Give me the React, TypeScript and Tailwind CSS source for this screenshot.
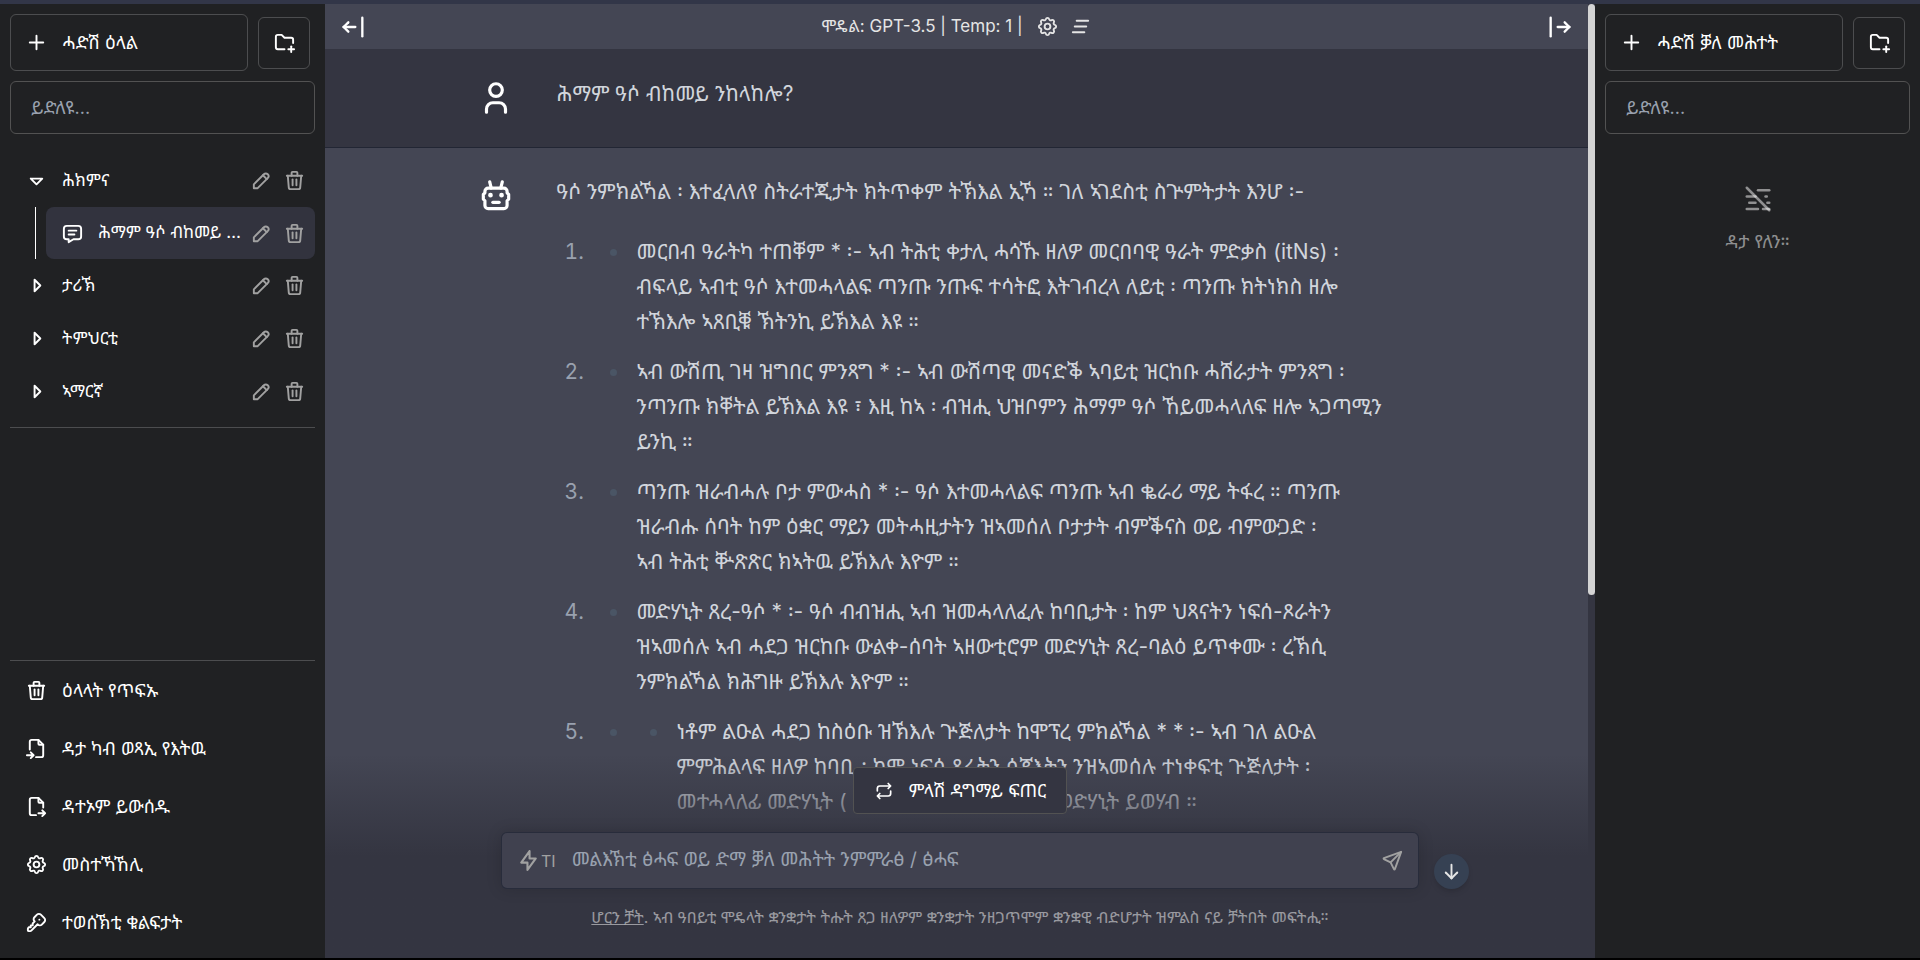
import { Fragment, type ReactNode } from "react";

const ICONS = {
  plus: ["M12 5v14", "M5 12h14"],
  folderPlus: [
    "M12 19h-7a2 2 0 0 1 -2 -2v-11a2 2 0 0 1 2 -2h4l3 3h7a2 2 0 0 1 2 2v3.5",
    "M16 19h6",
    "M19 16v6",
  ],
  caretDown: ["M6 10l6 6l6 -6h-12"],
  caretRight: ["M10 18l6 -6l-6 -6v12"],
  pencil: ["M4 20h4l10.5 -10.5a1.5 1.5 0 0 0 -4 -4l-10.5 10.5v4", "M13.5 6.5l4 4"],
  trash: [
    "M4 7h16",
    "M10 11v6",
    "M14 11v6",
    "M5 7l1 12a2 2 0 0 0 2 2h8a2 2 0 0 0 2 -2l1 -12",
    "M9 7v-3a1 1 0 0 1 1 -1h4a1 1 0 0 1 1 1v3",
  ],
  message: [
    "M8 9h8",
    "M8 13h6",
    "M18 4a3 3 0 0 1 3 3v8a3 3 0 0 1 -3 3h-5l-5 3v-3h-2a3 3 0 0 1 -3 -3v-8a3 3 0 0 1 3 -3h12z",
  ],
  fileImport: [
    "M14 3v4a1 1 0 0 0 1 1h4",
    "M5 13v-8a2 2 0 0 1 2 -2h7l5 5v11a2 2 0 0 1 -2 2h-5.5m-9.5 -2h7m-3 -3l3 3l-3 3",
  ],
  fileExport: [
    "M14 3v4a1 1 0 0 0 1 1h4",
    "M11.5 21h-4.5a2 2 0 0 1 -2 -2v-14a2 2 0 0 1 2 -2h7l5 5v5m-5 6h7m-3 -3l3 3l-3 3",
  ],
  settings: [
    "M10.325 4.317c.426 -1.756 2.924 -1.756 3.35 0a1.724 1.724 0 0 0 2.573 1.066c1.543 -.94 3.31 .826 2.37 2.37a1.724 1.724 0 0 0 1.065 2.572c1.756 .426 1.756 2.924 0 3.35a1.724 1.724 0 0 0 -1.066 2.573c.94 1.543 -.826 3.31 -2.37 2.37a1.724 1.724 0 0 0 -2.572 1.065c-.426 1.756 -2.924 1.756 -3.35 0a1.724 1.724 0 0 0 -2.573 -1.066c-1.543 .94 -3.31 -.826 -2.37 -2.37a1.724 1.724 0 0 0 -1.065 -2.572c-1.756 -.426 -1.756 -2.924 0 -3.35a1.724 1.724 0 0 0 1.066 -2.573c-.94 -1.543 .826 -3.31 2.37 -2.37c1 .608 2.296 .07 2.572 -1.065z",
    "M9 12a3 3 0 1 0 6 0a3 3 0 0 0 -6 0",
  ],
  key: [
    "M16.555 3.843l3.602 3.602a2.877 2.877 0 0 1 0 4.069l-2.643 2.643a2.877 2.877 0 0 1 -4.069 0l-.301 -.301l-6.558 6.558a2 2 0 0 1 -1.239 .578l-.175 .008h-1.172a1 1 0 0 1 -.993 -.883l-.007 -.117v-1.172a2 2 0 0 1 .467 -1.284l.119 -.13l.414 -.414h2v-2h2v-2l2.144 -2.144l-.301 -.301a2.877 2.877 0 0 1 0 -4.069l2.643 -2.643a2.877 2.877 0 0 1 4.069 0z",
    "M15 9h.01",
  ],
  barLeft: ["M4 12h10", "M4 12l4 4", "M4 12l4 -4", "M20 4v16"],
  barRight: ["M20 12h-10", "M20 12l-4 4", "M20 12l-4 -4", "M4 4v16"],
  clearAll: ["M8 6h12", "M6 12h12", "M4 18h12"],
  user: ["M8 7a4 4 0 1 0 8 0a4 4 0 0 0 -8 0", "M6 21v-2a4 4 0 0 1 4 -4h4a4 4 0 0 1 4 4v2"],
  robot: [
    "M7 7h10a2 2 0 0 1 2 2v1l1 1v3l-1 1v3a2 2 0 0 1 -2 2h-10a2 2 0 0 1 -2 -2v-3l-1 -1v-3l1 -1v-1a2 2 0 0 1 2 -2z",
    "M10 16h4",
    "M8 11.5a.5 .5 0 1 0 1 0a.5 .5 0 0 0 -1 0",
    "M15 11.5a.5 .5 0 1 0 1 0a.5 .5 0 0 0 -1 0",
    "M9 7l-1 -4",
    "M15 7l1 -4",
  ],
  repeat: [
    "M4 12v-3a3 3 0 0 1 3 -3h13m-3 -3l3 3l-3 3",
    "M20 12v3a3 3 0 0 1 -3 3h-13m3 3l-3 -3l3 -3",
  ],
  bolt: ["M13 3v7h6l-8 11v-7h-6l8 -11"],
  send: [
    "M10 14l11 -11",
    "M21 3l-6.5 18a.55 .55 0 0 1 -1 0l-3.5 -7l-7 -3.5a.55 .55 0 0 1 0 -1l18 -6.5",
  ],
  arrowDown: ["M12 5v14", "M18 13l-6 6", "M6 13l6 6"],
  mistOff: [
    "M12 5h9",
    "M3 10h7",
    "M18 10h1",
    "M5 15h5",
    "M19.500 15h1.500",
    "M3 20h9",
    "M16 20h5",
    "M3 3l18 18",
  ],
};

type IconName = keyof typeof ICONS;

function Icon({ name, className = "size-[23px]" }: { name: IconName; className?: string }) {
  return (
    <svg
      viewBox="0 0 24 24"
      fill="none"
      stroke="currentColor"
      strokeWidth={2}
      strokeLinecap="round"
      strokeLinejoin="round"
      aria-hidden="true"
      className={`shrink-0 ${className}`}
    >
      {ICONS[name].map((d) => (
        <path key={d} d={d} />
      ))}
    </svg>
  );
}

function SidebarTop({ title, folderLabel }: { title: string; folderLabel: string }) {
  return (
    <>
      <div className="flex items-center gap-[10px]">
        <button className="flex h-[57px] w-[238px] items-center gap-[14px] rounded-md border border-white/20 px-[14px] text-[18px] text-white">
          <Icon name="plus" />
          {title}
        </button>
        <button
          aria-label={folderLabel}
          className="flex size-[52px] items-center justify-center rounded-md border border-white/20 text-white"
        >
          <Icon name="folderPlus" />
        </button>
      </div>
      <input
        type="text"
        aria-label="ይድለዩ"
        placeholder="ይድለዩ..."
        className="h-[53px] w-full shrink-0 rounded-md border border-neutral-600 bg-transparent px-5 text-[18px] text-white placeholder:text-gray-400"
      />
    </>
  );
}

function RowActions() {
  return (
    <div className="flex gap-[10px] text-neutral-400">
      <button aria-label="Rename">
        <Icon name="pencil" />
      </button>
      <button aria-label="Delete">
        <Icon name="trash" />
      </button>
    </div>
  );
}

function FolderRow({ name, open = false }: { name: string; open?: boolean }) {
  return (
    <div className="flex h-[53px] items-center justify-between pr-[9px] pl-[15px]">
      <button className="flex items-center gap-[14px] text-[17px] text-white">
        <Icon name={open ? "caretDown" : "caretRight"} />
        {name}
      </button>
      <RowActions />
    </div>
  );
}

const MENU: { icon: IconName; label: string }[] = [
  { icon: "trash", label: "ዕላላት የጥፍኡ" },
  { icon: "fileImport", label: "ዳታ ካብ ወጻኢ የእትዉ" },
  { icon: "fileExport", label: "ዳተኦም ይውሰዱ" },
  { icon: "settings", label: "መስተኻኸሊ" },
  { icon: "key", label: "ተወሰኽቲ ቁልፍታት" },
];

const STEPS: string[][] = [
  [
    "መርበብ ዓራትካ ተጠቐም * ፡- ኣብ ትሕቲ ቀታሊ ሓሳኹ ዘለዎ መርበባዊ ዓራት ምድቃስ (itNs) ፡",
    "ብፍላይ ኣብቲ ዓሶ እተመሓላልፍ ጣንጡ ንጡፍ ተሳትፎ እትገብረላ ለይቲ ፡ ጣንጡ ክትነክስ ዘሎ",
    "ተኽእሎ ኣጸቢቑ ኽትንኪ ይኽእል እዩ ።",
  ],
  [
    "ኣብ ውሽጢ ገዛ ዝግበር ምንጻግ * ፡- ኣብ ውሽጣዊ መናድቕ ኣባይቲ ዝርከቡ ሓሸራታት ምንጻግ ፡",
    "ንጣንጡ ክቐትል ይኽእል እዩ ፣ እዚ ከኣ ፡ ብዝሒ ህዝቦምን ሕማም ዓሶ ኸይመሓላለፍ ዘሎ ኣጋጣሚን",
    "ይንኪ ።",
  ],
  [
    "ጣንጡ ዝራብሓሉ ቦታ ምውሓስ * ፡- ዓሶ እተመሓላልፍ ጣንጡ ኣብ ቈራሪ ማይ ትፋረ ። ጣንጡ",
    "ዝራብሑ ሰባት ከም ዕቋር ማይን መትሓዚታትን ዝኣመሰለ ቦታታት ብምቕናስ ወይ ብምውጋድ ፡",
    "ኣብ ትሕቲ ቝጽጽር ክኣትዉ ይኽእሉ እዮም ።",
  ],
  [
    "መድሃኒት ጸረ-ዓሶ * ፡- ዓሶ ብብዝሒ ኣብ ዝመሓላለፈሉ ከባቢታት ፡ ከም ህጻናትን ነፍሰ-ጾራትን",
    "ዝኣመሰሉ ኣብ ሓደጋ ዝርከቡ ውልቀ-ሰባት ኣዘውቲሮም መድሃኒት ጸረ-ባልዕ ይጥቀሙ ፡ ረኽሲ",
    "ንምክልኻል ክሕግዙ ይኽእሉ እዮም ።",
  ],
];

const LAST_STEP = [
  "ነቶም ልዑል ሓደጋ ከስዕቡ ዝኽእሉ ጕጅለታት ከሞፕረ ምክልኻል * * ፡- ኣብ ገለ ልዑል",
  "ምምሕልላፍ ዘለዎ ከባቢ ፡ ከም ነፍሰ ጾራትን ሰጃእትን ንዝኣመሰሉ ተነቀፍቲ ጕጅለታት ፡",
  "መተሓላለፊ መድሃኒት ( IPTp ) ዝበሃል ፍሉይ ናይ መድሃኒት ይወሃብ ።",
];

function Lines({ lines }: { lines: string[] }) {
  return (
    <>
      {lines.map((line, i) => (
        <Fragment key={line}>
          {i > 0 && <br />}
          {line}
        </Fragment>
      ))}
    </>
  );
}

function Message({ icon, children }: { icon: IconName; children: ReactNode }) {
  return (
    <div className="mx-auto flex w-full max-w-[960px] gap-[42px]">
      <Icon name={icon} className="size-[38px] text-white" />
      <div className="-mt-[3px] min-w-0 flex-1 text-[21px] leading-[35px] whitespace-nowrap text-gray-300">
        {children}
      </div>
    </div>
  );
}

export default function App() {
  return (
    <div className="flex h-screen flex-col overflow-hidden border-t-4 border-b-2 border-t-[#323648] border-b-black bg-[#343541] font-['Inter','Noto_Sans_Ethiopic','Noto_Sans',sans-serif]">
      <div className="flex min-h-0 flex-1">
        <aside className="flex w-[325px] shrink-0 flex-col gap-[10px] bg-[#202123] p-[10px]">
          <SidebarTop title="ሓድሽ ዕላል" folderLabel="New folder" />
          <nav className="min-h-0 flex-1 overflow-hidden">
            <div className="border-b border-white/20 pt-[10px] pb-[9px]">
              <FolderRow name="ሕክምና" open />
              <div className="ml-[25px] border-l border-white pl-[10px]">
                <div className="flex h-[52px] items-center justify-between rounded-lg bg-[#343541]/90 pr-[9px] pl-[15px]">
                  <button className="flex min-w-0 items-center gap-[14px] text-[17px] text-white">
                    <Icon name="message" />
                    <span className="w-[144px] truncate text-left">ሕማም ዓሶ ብከመይ ንከላከሎ?</span>
                  </button>
                  <RowActions />
                </div>
              </div>
              <FolderRow name="ታሪኽ" />
              <FolderRow name="ትምህርቲ" />
              <FolderRow name="ኣማርኛ" />
            </div>
          </nav>
          <div className="flex flex-col gap-[6px] border-t border-white/20 pt-[3px]">
            {MENU.map(({ icon, label }) => (
              <button key={label} className="flex h-[52px] items-center gap-[14px] px-[15px] text-[18px] text-white">
                <Icon name={icon} />
                {label}
              </button>
            ))}
          </div>
        </aside>

        <main className="relative flex min-w-0 flex-1 overflow-hidden bg-[#444654]">
          <div className="min-w-0 flex-1">
            <header className="flex h-[45px] items-center justify-between bg-[#444654] px-[14px] text-white">
              <button aria-label="Hide conversations">
                <Icon name="barLeft" className="size-[28px]" />
              </button>
              <div className="flex items-center text-[17px] text-neutral-200">
                ሞዴል: GPT-3.5 | Temp: 1 |
                <button aria-label="Settings" className="ml-[13px]">
                  <Icon name="settings" />
                </button>
                <button aria-label="Clear messages" className="ml-[10px]">
                  <Icon name="clearAll" />
                </button>
              </div>
              <button aria-label="Hide prompts">
                <Icon name="barRight" className="size-[28px]" />
              </button>
            </header>

            <section className="border-b border-gray-900/50 bg-[#343541] px-[10px] py-[30px]">
              <Message icon="user">
                <p>ሕማም ዓሶ ብከመይ ንከላከሎ?</p>
              </Message>
            </section>

            <section className="px-[10px] py-[29px]">
              <Message icon="robot">
                <p className="mb-[25px]">ዓሶ ንምክልኻል ፡ እተፈላለየ ስትራተጂታት ክትጥቀም ትኽእል ኢኻ ። ገለ ኣገደስቲ ስጕምትታት እንሆ ፡-</p>
                <ol className="flex list-decimal flex-col gap-[15px] pl-[33px] marker:text-gray-400">
                  {STEPS.map((lines) => (
                    <li key={lines[0]} className="pl-[7px]">
                      <ul className="list-disc pl-[33px] marker:text-gray-600">
                        <li className="pl-[7px]">
                          <Lines lines={lines} />
                        </li>
                      </ul>
                    </li>
                  ))}
                  <li className="pl-[7px]">
                    <ul className="list-disc pl-[33px] marker:text-gray-600">
                      <li className="pl-[7px]">
                        <ul className="list-disc pl-[33px]">
                          <li className="pl-[7px]">
                            <Lines lines={LAST_STEP} />
                          </li>
                        </ul>
                      </li>
                    </ul>
                  </li>
                </ol>
              </Message>
            </section>
          </div>

          <div className="w-[7px] shrink-0 bg-[#343541]">
            <div className="h-[62%] rounded-full bg-neutral-300" />
          </div>

          <div className="absolute inset-x-0 bottom-0 flex flex-col items-center bg-linear-to-b from-transparent via-[#343541] to-[#343541] pt-[13px] pb-[31px]">
            <button className="flex h-[47px] items-center gap-[15px] rounded border border-neutral-600 bg-[#343541] px-5 text-[18px] text-white">
              <Icon name="repeat" className="size-5" />
              ምላሽ ዳግማይ ፍጠር
            </button>
            <div className="relative mt-[18px] w-[918px]">
              <div className="flex h-[57px] items-center rounded-md border border-gray-900/50 bg-[#40414f] pr-[14px] pl-[14px] shadow-[0_0_15px_rgba(0,0,0,0.15)]">
                <button aria-label="Plugin" className="flex items-center text-[16px] text-neutral-400">
                  <Icon name="bolt" className="size-[25px]" />
                  TI
                </button>
                <input
                  type="text"
                  aria-label="መልእኽቲ"
                  placeholder="መልእኽቲ ፅሓፍ ወይ ድማ ቓለ መሕትት ንምምራፅ / ፅሓፍ"
                  className="ml-4 min-w-0 flex-1 bg-transparent text-[19px] text-white placeholder:text-gray-400"
                />
                <button aria-label="Send" className="text-neutral-400">
                  <Icon name="send" />
                </button>
              </div>
              <button
                aria-label="Scroll to bottom"
                className="absolute -right-[50px] bottom-0 flex size-[35px] items-center justify-center rounded-full bg-gray-700 text-neutral-200 shadow-md"
              >
                <Icon name="arrowDown" />
              </button>
            </div>
            <p className="mt-[18px] text-[16px] leading-5 text-white/50">
              <a href="#" className="underline">
                ሆርን ቻት
              </a>
              . ኣብ ዓበይቲ ሞዴላት ቋንቋታት ትሑት ጸጋ ዘለዎም ቋንቋታት ንዘጋጥሞም ቋንቋዊ ብድሆታት ዝምልስ ናይ ቻትበት መፍትሒ።
            </p>
          </div>
        </main>

        <aside className="flex w-[325px] shrink-0 flex-col gap-[10px] bg-[#202123] p-[10px]">
          <SidebarTop title="ሓድሽ ቓለ መሕተት" folderLabel="New prompt folder" />
          <div className="mt-10 flex flex-col items-center gap-[14px] text-[18px] text-white/50">
            <Icon name="mistOff" className="size-[30px]" />
            ዳታ የለን።
          </div>
        </aside>
      </div>
    </div>
  );
}
